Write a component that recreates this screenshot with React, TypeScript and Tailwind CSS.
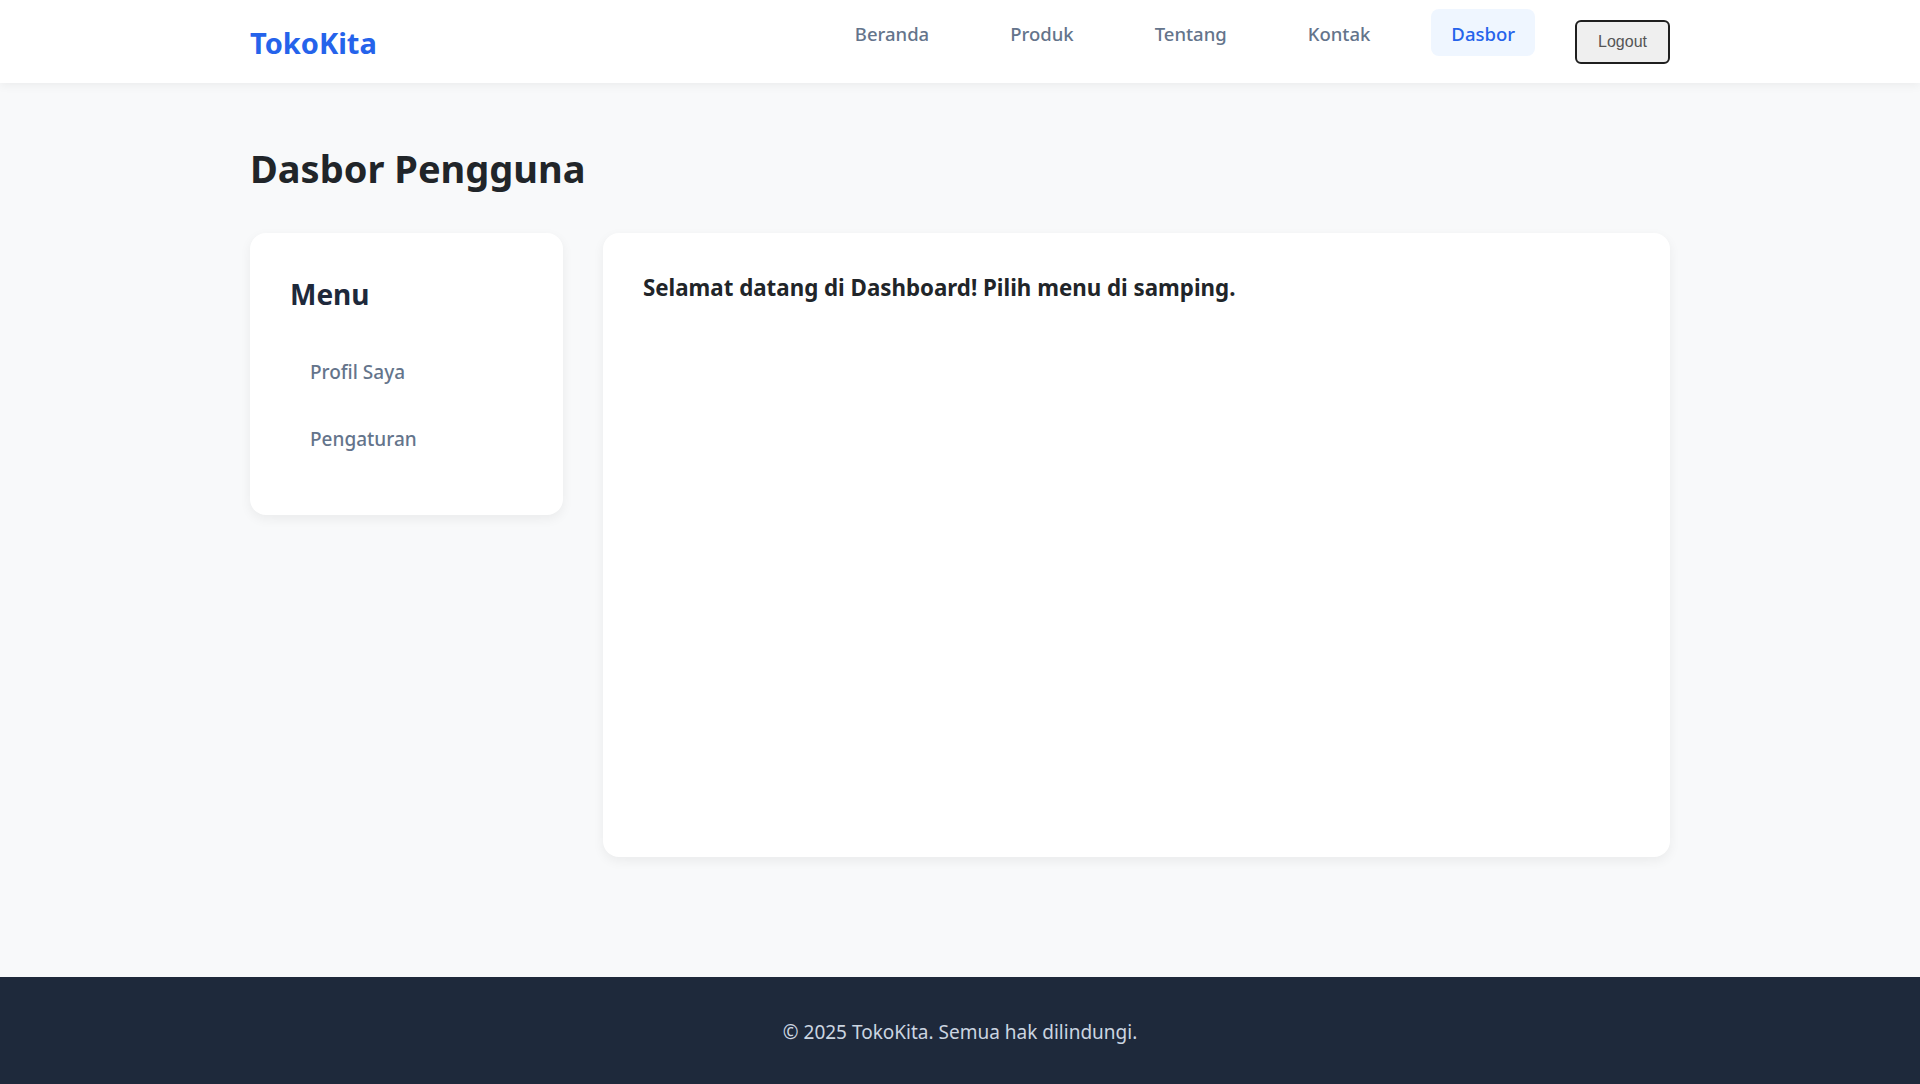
import React from 'react';

const navLinks = ['Beranda', 'Produk', 'Tentang', 'Kontak', 'Dasbor'];

const Header: React.FC = () => (
  <header className="bg-white shadow-[0_2px_10px_rgba(0,0,0,0.06)] relative z-10">
    <div className="max-w-[1420px] mx-auto h-[83px] flex items-center justify-between">
      <a className="text-[29px] font-bold text-[#2563eb] leading-[45px] mt-[2px]">TokoKita</a>
      <div className="flex items-center gap-10">
        <ul className="flex items-center gap-[41px] mb-[19px]">
          {navLinks.map((link) => (
            <li key={link}>
              <a
                className={
                  link === 'Dasbor'
                    ? 'block px-5 pt-[11px] pb-[9px] rounded-lg text-[18.5px] leading-[27px] font-medium bg-[#eff6ff] text-[#2563eb]'
                    : 'block px-5 pt-[11px] pb-[9px] rounded-lg text-[18.5px] leading-[27px] font-medium text-[#64748b]'
                }
              >
                {link}
              </a>
            </li>
          ))}
        </ul>
        <button
          className="px-[21px] py-[10px] border-2 border-[#1f1f1f] rounded-md bg-[#efefef] text-[#555] text-[16px] leading-[20px]"
          style={{ fontFamily: '"Liberation Sans", Arial, sans-serif' }}
        >
          Logout
        </button>
      </div>
    </div>
  </header>
);

const App: React.FC = () => {
  return (
    <div
      className="min-h-screen flex flex-col bg-[#f8f9fa]"
      style={{ fontFamily: '"Noto Sans", "Open Sans", sans-serif' }}
    >
      <Header />

      <main className="flex-1 w-full max-w-[1420px] mx-auto pt-[62px] pb-[60px]">
        <h1 className="text-[38px] font-bold text-[#212529] leading-[46px] mb-[42px]">Dasbor Pengguna</h1>

        <div className="grid grid-cols-[313px_1fr] gap-10 items-start">
          <aside className="bg-white rounded-2xl shadow-[0_4px_12px_rgba(0,0,0,0.06)] px-10 pt-[44px] pb-[50px]">
            <h2 className="text-[28px] font-bold text-[#1e293b] leading-[34px] mb-[36px]">Menu</h2>
            <ul className="flex flex-col gap-4">
              <li>
                <a className="block px-5 py-3 rounded-lg text-[19px] leading-[27px] font-medium text-[#64748b]">Profil Saya</a>
              </li>
              <li>
                <a className="block px-5 py-3 rounded-lg text-[19px] leading-[27px] font-medium text-[#64748b]">Pengaturan</a>
              </li>
            </ul>
          </aside>

          <section className="bg-white rounded-2xl shadow-[0_4px_12px_rgba(0,0,0,0.06)] p-10 min-h-[624px]">
            <p className="text-[22.3px] font-bold text-[#212529] leading-[30px]">
              Selamat datang di Dashboard! Pilih menu di samping.
            </p>
          </section>
        </div>
      </main>

      <footer className="bg-[#1e293b] h-[107px] flex items-center justify-center pt-[4px]">
        <p className="text-[19px] text-[#cbd5e1]">© 2025 TokoKita. Semua hak dilindungi.</p>
      </footer>
    </div>
  );
};

export default App;
